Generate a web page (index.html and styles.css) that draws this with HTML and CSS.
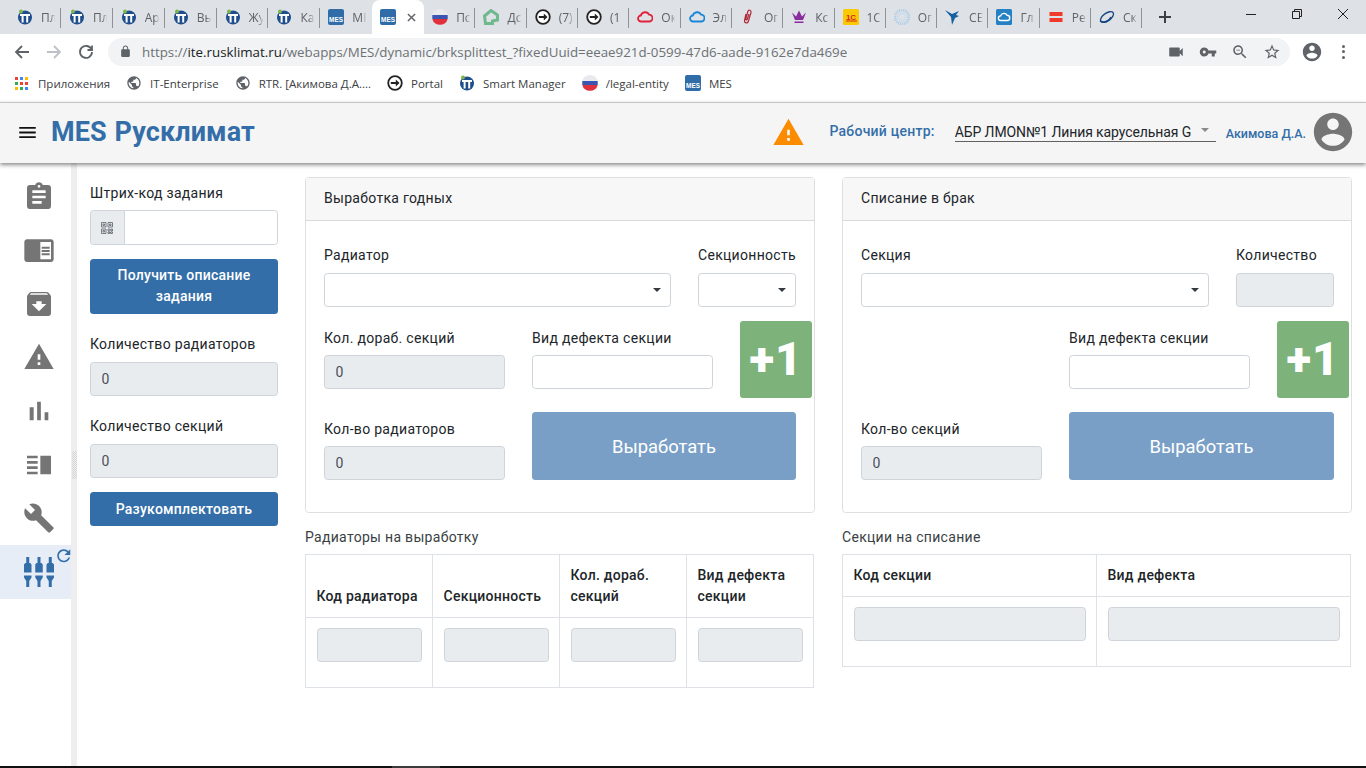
FILE: index.html
```html
<!DOCTYPE html>
<html lang="en">
  <head>
    <meta charset="UTF-8" />
    <meta name="viewport" content="width=device-width, initial-scale=1.0" />
    <title>MES Русклимат</title>
    <link rel="stylesheet" href="styles.css">
  </head>
  <body>
    <svg class="icon-defs" xmlns="http://www.w3.org/2000/svg">
      <symbol id="fav-it" viewBox="0 0 16 16">
        <circle cx="8" cy="8.5" r="7" fill="#1f4e8c" />
        <rect x="3" y="5" width="10" height="2" fill="#fff" />
        <rect x="4.6" y="7" width="2" height="6.5" fill="#fff" />
        <rect x="9.2" y="7" width="2" height="6.5" fill="#fff" />
        <circle cx="4" cy="2.6" r="2" fill="#7ab648" />
      </symbol>
      <symbol id="fav-ru" viewBox="0 0 16 16">
        <circle cx="8" cy="8" r="8" fill="#e9e9ee" />
        <path d="M.3 6h15.4v4H.3z" fill="#3a56b0" />
        <path d="M.3 10h15.4A8 8 0 0 1 .3 10z" fill="#e0303c" />
      </symbol>
      <symbol id="fav-house" viewBox="0 0 16 16">
        <path d="M1.500 7l6.500-5.500 6.500 4.500v5l-5 1v2.500H2.500z" fill="none" stroke="#6fb98f" stroke-width="3" />
      </symbol>
      <symbol id="fav-arrow" viewBox="0 0 16 16">
        <circle cx="8" cy="8" r="6.8" fill="#fff" stroke="#222" stroke-width="1.8" />
        <path d="M3.8 7.1h5V4.6L12.5 8l-3.7 3.4V8.9h-5z" fill="#222" />
      </symbol>
      <symbol id="fav-cloud-red" viewBox="0 0 16 16">
        <path d="M4.2 12.5a3 3 0 0 1-.3-6 4.4 4.4 0 0 1 8.2-.8 3.4 3.4 0 0 1 0 6.8z" fill="none" stroke="#e3203a" stroke-width="1.8" />
      </symbol>
      <symbol id="fav-cloud-blue" viewBox="0 0 16 16">
        <path d="M4.2 12.5a3 3 0 0 1-.3-6 4.4 4.4 0 0 1 8.2-.8 3.4 3.4 0 0 1 0 6.8z" fill="none" stroke="#1a86d8" stroke-width="1.8" />
      </symbol>
      <symbol id="fav-clip" viewBox="0 0 16 16">
        <path d="M6 5l-1.500 6.500c-.5 2.500 3 3.500 3.800 1L11 3.500C11.500 1 8.500.3 7.800 2.500L5.800 10c-.2 1 1 1.300 1.400.5L9 5" fill="none" stroke="#b02a37" stroke-width="1.200" />
      </symbol>
      <symbol id="fav-crown" viewBox="0 0 16 16">
        <path d="M1 3.500l3 7.500h8l3-7.500-4 4L8 1.500 5 7.500zM3.500 12.500h9V14h-9z" fill="#8a2d9c" />
      </symbol>
      <symbol id="fav-dots" viewBox="0 0 16 16">
        <circle cx="8" cy="8" r="7" fill="none" stroke="#a9cbe6" stroke-width="2.500" stroke-dasharray="1 1" />
        <circle cx="8" cy="8" r="4" fill="none" stroke="#c5dcee" stroke-width="3" stroke-dasharray="1 1" />
      </symbol>
      <symbol id="fav-bird" viewBox="0 0 16 16">
        <path d="M0 1l7 4 7-3-3 4 3 1-4 2-3 7-1-8z" fill="#15609e" />
      </symbol>
      <symbol id="fav-cloud-box" viewBox="0 0 16 16">
        <rect width="16" height="16" rx="1.500" fill="#2581c4" />
        <path d="M4.800 11.500a2.300 2.300 0 0 1-.2-4.600 3.500 3.500 0 0 1 6.500-.6 2.600 2.600 0 0 1 0 5.200z" fill="none" stroke="#fff" stroke-width="1.400" />
      </symbol>
      <symbol id="fav-stripes" viewBox="0 0 16 16">
        <path d="M1.500 3h13v4h-13zM1.500 9h13v4h-13z" fill="#ef3a2c" />
      </symbol>
      <symbol id="fav-orbit" viewBox="0 0 16 16">
        <ellipse cx="8" cy="8" rx="7.500" ry="3.800" transform="rotate(-35 8 8)" fill="none" stroke="#16477f" stroke-width="1.300" />
        <path d="M1 12c4 2 9 1 11-4" fill="none" stroke="#16477f" stroke-width="1.600" />
      </symbol>
      <symbol id="i-globe" viewBox="0 0 24 24">
        <path d="M12 2C6.480 2 2 6.480 2 12s4.480 10 10 10 10-4.480 10-10S17.520 2 12 2zm-1 17.930c-3.950-.49-7-3.850-7-7.930 0-.62.08-1.210.21-1.790L9 15v1c0 1.100.9 2 2 2v1.930zm6.900-2.540c-.26-.81-1-1.390-1.900-1.390h-1v-3c0-.55-.45-1-1-1H8v-2h2c.55 0 1-.45 1-1V7h2c1.100 0 2-.9 2-2v-.41c2.930 1.190 5 4.060 5 7.410 0 2.080-.8 3.970-2.100 5.390z" />
      </symbol>
      <symbol id="i-warning" viewBox="0 0 24 24">
        <path d="M1 21h22L12 2 1 21zm12-3h-2v-2h2v2zm0-4h-2v-4h2v4z" />
      </symbol>
      <symbol id="i-account" viewBox="0 0 24 24">
        <path d="M12 2C6.480 2 2 6.480 2 12s4.480 10 10 10 10-4.480 10-10S17.520 2 12 2zm0 3c1.660 0 3 1.340 3 3s-1.340 3-3 3-3-1.340-3-3 1.340-3 3-3zm0 14.200c-2.500 0-4.710-1.280-6-3.220.03-1.990 4-3.080 6-3.080 1.990 0 5.970 1.090 6 3.080-1.290 1.940-3.500 3.220-6 3.220z" />
      </symbol>
    </svg>

    <div class="tabstrip">
      <div class="tab"><svg class="fav"><use href="#fav-it" /></svg><span>Пл</span></div>
      <div class="tab"><svg class="fav"><use href="#fav-it" /></svg><span>Пл</span></div>
      <div class="tab"><svg class="fav"><use href="#fav-it" /></svg><span>Ар</span></div>
      <div class="tab"><svg class="fav"><use href="#fav-it" /></svg><span>Вь</span></div>
      <div class="tab"><svg class="fav"><use href="#fav-it" /></svg><span>Жу</span></div>
      <div class="tab"><svg class="fav"><use href="#fav-it" /></svg><span>Ка</span></div>
      <div class="tab tab-before-active">
        <svg class="fav fav-mes" viewBox="0 0 16 16"><rect width="16" height="16" rx="2" /><text x="8" y="12.600">MES</text></svg>
        <span>МЕ</span>
      </div>
      <div class="tab tab-active">
        <svg class="fav fav-mes" viewBox="0 0 16 16"><rect width="16" height="16" rx="2" /><text x="8" y="12.600">MES</text></svg>
        <svg class="tab-close" viewBox="0 0 10 10"><path d="M1 1l8 8M9 1l-8 8" /></svg>
      </div>
      <div class="tab"><svg class="fav"><use href="#fav-ru" /></svg><span>Пс</span></div>
      <div class="tab"><svg class="fav"><use href="#fav-house" /></svg><span>Дс</span></div>
      <div class="tab"><svg class="fav"><use href="#fav-arrow" /></svg><span>(7)</span></div>
      <div class="tab"><svg class="fav"><use href="#fav-arrow" /></svg><span>(1</span></div>
      <div class="tab"><svg class="fav"><use href="#fav-cloud-red" /></svg><span>Ок</span></div>
      <div class="tab"><svg class="fav"><use href="#fav-cloud-blue" /></svg><span>Эл</span></div>
      <div class="tab"><svg class="fav"><use href="#fav-clip" /></svg><span>Ог</span></div>
      <div class="tab"><svg class="fav"><use href="#fav-crown" /></svg><span>Кс</span></div>
      <div class="tab">
        <svg class="fav fav-1c" viewBox="0 0 16 16"><rect width="16" height="16" rx="1.500" /><text x="8" y="10.500">1С</text><path d="M3 11.500h11v1H3z" /></svg>
        <span>1С</span>
      </div>
      <div class="tab"><svg class="fav"><use href="#fav-dots" /></svg><span>Ог</span></div>
      <div class="tab"><svg class="fav"><use href="#fav-bird" /></svg><span>СЕ</span></div>
      <div class="tab"><svg class="fav"><use href="#fav-cloud-box" /></svg><span>Гл</span></div>
      <div class="tab"><svg class="fav"><use href="#fav-stripes" /></svg><span>Ре</span></div>
      <div class="tab"><svg class="fav"><use href="#fav-orbit" /></svg><span>Ск</span></div>
      <svg class="new-tab" viewBox="0 0 12 12"><path d="M6 0v12M0 6h12" /></svg>
      <div class="window-controls">
        <svg viewBox="0 0 12 12"><path d="M1 6.500h10" /></svg>
        <svg viewBox="0 0 12 12"><path d="M1.500 3.500h7v7h-7zM3.500 3.500v-2h7v7h-2" /></svg>
        <svg viewBox="0 0 12 12"><path d="M1 1l10 10M11 1L1 11" /></svg>
      </div>
    </div>

    <div class="toolbar">
      <svg class="nav-btn" viewBox="0 0 16 16"><path d="M15 8H2M8 2L2 8l6 6" /></svg>
      <svg class="nav-btn nav-off" viewBox="0 0 16 16"><path d="M1 8h13M8 2l6 6-6 6" /></svg>
      <svg class="nav-btn" viewBox="0 0 16 16"><path d="M13.500 5.500A6 6 0 1 0 14 8M14 1.500v4.500H9.500" /></svg>
      <div class="omnibox">
        <svg class="lock" viewBox="0 0 24 24"><path d="M18 8h-1V6c0-2.760-2.240-5-5-5S7 3.240 7 6v2H6c-1.100 0-2 .9-2 2v10c0 1.100.9 2 2 2h12c1.100 0 2-.9 2-2V10c0-1.100-.9-2-2-2zm-2.900 0H8.900V6c0-1.710 1.390-3.100 3.100-3.100 1.710 0 3.100 1.390 3.100 3.100v2z" /></svg>
        <div class="url">https://<b>ite.rusklimat.ru</b>/webapps/MES/dynamic/brksplittest_?fixedUuid=eeae921d-0599-47d6-aade-9162e7da469e</div>
        <svg class="omni-icon" viewBox="0 0 24 24"><path d="M17 10.500V7c0-.55-.45-1-1-1H4c-.55 0-1 .45-1 1v10c0 .55.45 1 1 1h12c.55 0 1-.45 1-1v-3.500l4 4v-11l-4 4z" /></svg>
        <svg class="omni-icon" viewBox="0 0 24 24"><path d="M12.650 10C11.830 7.670 9.610 6 7 6c-3.310 0-6 2.690-6 6s2.690 6 6 6c2.610 0 4.830-1.670 5.650-4H17v4h4v-4h2v-4H12.650zM7 14c-1.100 0-2-.9-2-2s.9-2 2-2 2 .9 2 2-.9 2-2 2z" /></svg>
        <svg class="omni-icon" viewBox="0 0 24 24"><path d="M15.500 14h-.79l-.28-.27C15.410 12.590 16 11.110 16 9.500 16 5.910 13.090 3 9.500 3S3 5.910 3 9.500 5.910 16 9.500 16c1.610 0 3.090-.59 4.230-1.570l.27.28v.79l5 4.990L20.490 19l-4.990-5zm-6 0C7.010 14 5 11.990 5 9.500S7.010 5 9.500 5 14 7.010 14 9.500 11.990 14 9.500 14zM7 9h5v1H7z" /></svg>
        <svg class="omni-icon" viewBox="0 0 24 24"><path d="M22 9.240l-7.190-.62L12 2 9.190 8.630 2 9.240l5.460 4.730L5.820 21 12 17.270 18.180 21l-1.630-7.030L22 9.240zM12 15.400l-3.760 2.270 1-4.280-3.320-2.880 4.380-.38L12 6.100l1.710 4.040 4.380.38-3.320 2.880 1 4.280L12 15.400z" /></svg>
      </div>
      <svg class="profile"><use href="#i-account" /></svg>
      <div class="menu-dots"><i></i><i></i><i></i></div>
    </div>

    <div class="bookmarks">
      <div class="bookmark">
        <div class="apps-grid">
          <i class="c1"></i><i class="c2"></i><i class="c3"></i>
          <i class="c4"></i><i class="c5"></i><i class="c1"></i>
          <i class="c3"></i><i class="c6"></i><i class="c2"></i>
        </div>
        <span>Приложения</span>
      </div>
      <div class="bookmark"><svg class="fav globe"><use href="#i-globe" /></svg><span>IT-Enterprise</span></div>
      <div class="bookmark"><svg class="fav globe"><use href="#i-globe" /></svg><span>RTR. [Акимова Д.А....</span></div>
      <div class="bookmark"><svg class="fav"><use href="#fav-arrow" /></svg><span>Portal</span></div>
      <div class="bookmark"><svg class="fav"><use href="#fav-it" /></svg><span>Smart Manager</span></div>
      <div class="bookmark"><svg class="fav"><use href="#fav-ru" /></svg><span>/legal-entity</span></div>
      <div class="bookmark">
        <svg class="fav fav-mes" viewBox="0 0 16 16"><rect width="16" height="16" rx="2" /><text x="8" y="12.600">MES</text></svg>
        <span>MES</span>
      </div>
    </div>

    <header class="app-header">
      <svg class="hamburger" viewBox="0 0 18 12"><path d="M0 0h18v2H0zM0 5h18v2H0zM0 10h18v2H0z" /></svg>
      <h1 class="app-title">MES Русклимат</h1>
      <svg class="header-warning"><use href="#i-warning" /></svg>
      <span class="wc-label">Рабочий центр:</span>
      <div class="wc-select">
        <span>АБР ЛМОN№1 Линия карусельная G</span>
      </div>
      <span class="user-name">Акимова Д.А.</span>
      <svg class="user-avatar"><use href="#i-account" /></svg>
    </header>

    <div class="app-body">
      <nav class="sidebar">
        <div class="side-item"><svg viewBox="0 0 24 24"><path d="M19 3h-4.180C14.400 1.840 13.300 1 12 1c-1.300 0-2.400.84-2.820 2H5c-1.100 0-2 .9-2 2v14c0 1.100.9 2 2 2h14c1.100 0 2-.9 2-2V5c0-1.100-.9-2-2-2zm-7 0c.55 0 1 .45 1 1s-.45 1-1 1-1-.45-1-1 .45-1 1-1zm2 14H7v-2h7v2zm3-4H7v-2h10v2zm0-4H7V7h10v2z" /></svg></div>
        <div class="side-item"><svg viewBox="0 0 24 24"><path fill-rule="evenodd" d="M3 4h18c1.100 0 2 .9 2 2v13c0 1.100-.9 2-2 2H3c-1.100 0-2-.9-2-2V6c0-1.100.9-2 2-2zm10 2v13h8V6h-8zm1 3.500h6V11h-6V9.500zm0 2.500h6v1.500h-6V12zm0 2.500h6V16h-6v-1.500z" /></svg></div>
        <div class="side-item"><svg viewBox="0 0 24 24"><path d="M20.540 5.230l-1.390-1.680C18.880 3.210 18.470 3 18 3H6c-.47 0-.88.21-1.160.55L3.460 5.230C3.170 5.570 3 6.020 3 6.500V19c0 1.100.9 2 2 2h14c1.100 0 2-.9 2-2V6.500c0-.48-.17-.93-.46-1.270zM12 17.500L6.500 12H10v-2h4v2h3.500L12 17.500zM5.120 5l.81-1h12l.94 1H5.120z" /></svg></div>
        <div class="side-item"><svg><use href="#i-warning" /></svg></div>
        <div class="side-item"><svg viewBox="0 0 24 24"><path d="M5 9.200h3V19H5zM10.600 5h2.800v14h-2.800zm5.600 8H19v6h-2.800z" /></svg></div>
        <div class="side-item"><svg viewBox="0 0 24 24"><path d="M3 15h8v-2H3v2zm0 4h8v-2H3v2zm0-8h8V9H3v2zm0-6v2h8V5H3zm10 0h8v14h-8V5z" /></svg></div>
        <div class="side-item"><svg viewBox="0 0 24 24"><path d="M22.700 19l-9.100-9.100c.9-2.300.4-5-1.500-6.900-2-2-5-2.400-7.400-1.300L9 6 6 9 1.600 4.700C.4 7.100.9 10.100 2.900 12.100c1.900 1.900 4.600 2.400 6.900 1.500l9.100 9.100c.4.400 1 .4 1.400 0l2.300-2.300c.5-.4.5-1.100.1-1.400z" /></svg></div>
        <div class="side-item side-active">
          <svg class="plugs" viewBox="0 0 30 30">
            <path id="plug" d="M2.250 0h3v6h1l1.250 1.500v8H0v-8L1.250 6h1zM0 18.500h7.500v2L5.250 24v6h-3v-6L0 20.500z" />
            <use href="#plug" x="11.250" />
            <use href="#plug" x="22.500" />
          </svg>
          <svg class="side-badge" viewBox="0 0 24 24"><path d="M17.650 6.350C16.200 4.900 14.210 4 12 4c-4.420 0-7.990 3.580-7.990 8s3.570 8 7.990 8c3.730 0 6.840-2.550 7.730-6h-2.080c-.82 2.330-3.040 4-5.650 4-3.310 0-6-2.690-6-6s2.690-6 6-6c1.660 0 3.140.69 4.220 1.780L13 11h7V4l-2.350 2.350z" /></svg>
        </div>
      </nav>

      <div class="splitter"><div class="splitter-grip"></div></div>

      <main class="content">
        <section class="task-col">
          <div class="field">
            <label>Штрих-код задания</label>
            <div class="input-group">
              <span class="input-addon">
                <svg viewBox="0 0 12 12"><path d="M.5.5h4.500v4.500H.5zM7 .5h4.500v4.500H7zM.5 7h4.500v4.500H.5zM2 2h1.500v1.500H2zM8.500 2H10v1.500H8.500zM2 8.500h1.500V10H2zM7 7h2v2H7zM10 7h1.500v2H10zM7 10h1.500v1.500H7zM9.500 10h2v1.500h-2z" /></svg>
              </span>
              <input class="form-control" type="text" />
            </div>
          </div>
          <button class="btn btn-primary btn-describe">Получить описание задания</button>
          <div class="field">
            <label>Количество радиаторов</label>
            <input class="form-control" type="text" value="0" disabled />
          </div>
          <div class="field">
            <label>Количество секций</label>
            <input class="form-control" type="text" value="0" disabled />
          </div>
          <button class="btn btn-primary btn-split">Разукомплектовать</button>
        </section>

        <section class="work-col">
          <div class="card">
            <div class="card-header">Выработка годных</div>
            <div class="card-body">
              <div class="row">
                <div class="field grow">
                  <label>Радиатор</label>
                  <div class="select"></div>
                </div>
                <div class="field col-small">
                  <label>Секционность</label>
                  <div class="select"></div>
                </div>
              </div>
              <div class="row">
                <div class="field col-half pushed">
                  <label>Кол. дораб. секций</label>
                  <input class="form-control" type="text" value="0" disabled />
                </div>
                <div class="field col-half pushed">
                  <label>Вид дефекта секции</label>
                  <input class="form-control" type="text" />
                </div>
                <button class="btn-plus">+1</button>
              </div>
              <div class="row row-end">
                <div class="field col-half">
                  <label>Кол-во радиаторов</label>
                  <input class="form-control" type="text" value="0" disabled />
                </div>
                <button class="btn btn-primary btn-make" disabled>Выработать</button>
              </div>
            </div>
          </div>
          <div class="table-title">Радиаторы на выработку</div>
          <table class="grid-table">
            <thead>
              <tr>
                <th>Код радиатора</th>
                <th>Секционность</th>
                <th>Кол. дораб. секций</th>
                <th>Вид дефекта секции</th>
              </tr>
            </thead>
            <tbody>
              <tr>
                <td><input class="form-control" type="text" disabled /></td>
                <td><input class="form-control" type="text" disabled /></td>
                <td><input class="form-control" type="text" disabled /></td>
                <td><input class="form-control" type="text" disabled /></td>
              </tr>
            </tbody>
          </table>
        </section>

        <section class="work-col work-col-right">
          <div class="card">
            <div class="card-header">Списание в брак</div>
            <div class="card-body">
              <div class="row">
                <div class="field grow">
                  <label>Секция</label>
                  <div class="select"></div>
                </div>
                <div class="field col-small">
                  <label>Количество</label>
                  <input class="form-control" type="text" disabled />
                </div>
              </div>
              <div class="row">
                <div class="col-half"></div>
                <div class="field col-half pushed">
                  <label>Вид дефекта секции</label>
                  <input class="form-control" type="text" />
                </div>
                <button class="btn-plus">+1</button>
              </div>
              <div class="row row-end">
                <div class="field col-half">
                  <label>Кол-во секций</label>
                  <input class="form-control" type="text" value="0" disabled />
                </div>
                <button class="btn btn-primary btn-make" disabled>Выработать</button>
              </div>
            </div>
          </div>
          <div class="table-title">Секции на списание</div>
          <table class="grid-table">
            <thead>
              <tr>
                <th>Код секции</th>
                <th>Вид дефекта</th>
              </tr>
            </thead>
            <tbody>
              <tr>
                <td><input class="form-control" type="text" disabled /></td>
                <td><input class="form-control" type="text" disabled /></td>
              </tr>
            </tbody>
          </table>
        </section>
      </main>
    </div>

    <div class="taskbar"><div class="taskbar-item"></div></div>
  </body>
</html>
```

FILE: styles.css
```css
* {
  box-sizing: border-box;
  margin: 0;
  padding: 0;
}

html,
body {
  height: 100%;
}

body {
  display: flex;
  flex-direction: column;
  width: 1366px;
  height: 768px;
  overflow: hidden;
  background-color: white;
  font-family: Roboto, "Liberation Sans", sans-serif;
  font-size: 14px;
  line-height: 21px;
  color: #212529;
}

.icon-defs {
  position: absolute;
  width: 0;
  height: 0;
}

/* browser chrome */

.tabstrip {
  display: flex;
  align-items: center;
  flex: 0 0 34px;
  padding-left: 9px;
  background-color: #dee1e6;
  font-family: "Open Sans", sans-serif;
  font-size: 12px;
  color: #5f6368;
}

.tab {
  display: flex;
  align-items: center;
  flex: 0 0 51.3px;
  height: 34px;
  padding-left: 8px;
  position: relative;
}

.tab:nth-child(-n + 8) {
  flex-basis: 51.9px;
}

.tab::after {
  content: "";
  position: absolute;
  right: 0;
  top: 8px;
  width: 1px;
  height: 20px;
  background-color: #8f9296;
}

.tab span {
  width: 17px;
  margin-left: 8px;
  white-space: nowrap;
  -webkit-mask-image: linear-gradient(to right, #000 55%, transparent 85%);
  mask-image: linear-gradient(to right, #000 55%, transparent 85%);
}

.tab-before-active::after {
  display: none;
}

.tab-active {
  background-color: white;
  border-radius: 8px 8px 0 0;
}

.tab-active::after {
  display: none;
}

.tab-close {
  width: 9px;
  height: 9px;
  margin-left: 11px;
  fill: none;
  stroke: #5f6368;
  stroke-width: 1.6;
}

.fav {
  flex: 0 0 16px;
  width: 16px;
  height: 16px;
}

.fav-mes rect {
  fill: #2f6ca8;
}

.fav-mes text {
  font-family: "Liberation Sans", sans-serif;
  font-size: 6.400px;
  font-weight: 700;
  text-anchor: middle;
  fill: white;
}

.fav-1c rect {
  fill: #fbc900;
}

.fav-1c path {
  fill: #d8232a;
}

.fav-1c text {
  font-family: "Liberation Sans", sans-serif;
  font-size: 8px;
  font-weight: 700;
  text-anchor: middle;
  fill: #d8232a;
}

.new-tab {
  width: 12px;
  height: 12px;
  margin: 0 0 0 17px;
  fill: none;
  stroke: #3c4043;
  stroke-width: 2;
}

.window-controls {
  display: flex;
  gap: 34px;
  margin-left: 74px;
  margin-top: -6px;
}

.window-controls svg {
  width: 12px;
  height: 12px;
  fill: none;
  stroke: #222;
  stroke-width: 1;
}

.toolbar {
  display: flex;
  align-items: center;
  flex: 0 0 35px;
  padding-left: 14px;
  background-color: white;
}

.nav-btn {
  width: 16px;
  height: 16px;
  margin-right: 16px;
  fill: none;
  stroke: #5f6368;
  stroke-width: 1.8;
}

.nav-off {
  stroke: #bdc1c6;
}

.omnibox {
  display: flex;
  align-items: center;
  width: 1182px;
  height: 28px;
  margin-left: -2px;
  padding: 0 9px 0 11px;
  border-radius: 14px;
  background-color: #f1f3f4;
}

.lock {
  width: 13px;
  height: 13px;
  fill: #5f6368;
}

.url {
  flex: 1;
  margin-left: 10px;
  padding-top: 1px;
  font-family: "Open Sans", sans-serif;
  font-size: 13.330px;
  color: #6d7175;
  white-space: nowrap;
}

.url b {
  font-weight: 400;
  color: #202124;
}

.omni-icon {
  width: 18px;
  height: 18px;
  margin-left: 14px;
  fill: #5f6368;
}

.profile {
  width: 22px;
  height: 22px;
  margin-left: 11px;
  fill: #5f6368;
}

.menu-dots {
  display: flex;
  flex-direction: column;
  gap: 2.500px;
  margin-left: 19px;
}

.menu-dots i {
  display: block;
  width: 3px;
  height: 3px;
  border-radius: 50%;
  background-color: #5f6368;
}

.bookmarks {
  display: flex;
  align-items: center;
  gap: 16px;
  flex: 0 0 33px;
  padding: 0 0 5px 15px;
  background-color: white;
  font-family: "Open Sans", sans-serif;
  font-size: 11.500px;
  color: #3c4043;
}

.bookmark {
  display: flex;
  align-items: center;
  gap: 8px;
}

.bookmark .globe {
  fill: #5f6368;
}

.apps-grid {
  display: grid;
  grid-template-columns: repeat(3, 3px);
  gap: 2px;
  width: 15px;
}

.apps-grid i {
  display: block;
  height: 3px;
}

.c1 { background-color: #ea4335; }
.c2 { background-color: #4285f4; }
.c3 { background-color: #fbbc04; }
.c4 { background-color: #34a853; }
.c5 { background-color: #ea4335; }
.c6 { background-color: #34a853; }

/* app header */

.app-header {
  display: flex;
  align-items: center;
  flex: 0 0 61px;
  padding: 0 10.500px 0 19px;
  border-top: 1px solid #c4c4c4;
  background-color: #f5f5f5;
  box-shadow: 0 2px 4px rgba(0, 0, 0, 0.45);
  position: relative;
  z-index: 2;
}

.hamburger {
  width: 17px;
  height: 11px;
  margin-top: -1px;
  fill: #111;
}

.app-title {
  margin: 0 0 2px 15px;
  font-size: 27px;
  font-weight: 700;
  letter-spacing: 0.100px;
  word-spacing: 1px;
  color: #336ea8;
  white-space: nowrap;
}

.header-warning {
  width: 33px;
  height: 33px;
  margin: 0 0 2px auto;
  fill: #fb8c00;
}

.wc-label {
  margin: 0 0 3px 24.500px;
  font-weight: 500;
  letter-spacing: 0.250px;
  color: #336ea8;
}

.wc-select {
  width: 261px;
  height: 22px;
  margin: 0 0 4px 20px;
  padding-top: 2px;
  border-bottom: 1px solid #616161;
  letter-spacing: -0.100px;
  color: #212529;
  white-space: nowrap;
  position: relative;
}

.wc-select::after {
  content: "";
  position: absolute;
  right: 6.500px;
  top: 8px;
  border-left: 4.500px solid transparent;
  border-right: 4.500px solid transparent;
  border-top: 4.500px solid #8a8a8a;
}

.user-name {
  margin-left: 10px;
  font-size: 12.500px;
  font-weight: 500;
  color: #336ea8;
  white-space: nowrap;
}

.user-avatar {
  width: 46px;
  height: 46px;
  margin: 0 0 2px 3.500px;
  fill: #757575;
}

/* page */

.app-body {
  display: flex;
  flex: 1;
  min-height: 0;
}

.sidebar {
  flex: 0 0 71px;
  padding-top: 6.800px;
}

.side-item {
  display: flex;
  align-items: center;
  justify-content: center;
  height: 53.600px;
  position: relative;
}

.side-item svg {
  width: 32px;
  height: 32px;
  fill: #757575;
  margin-left: 6px;
}

.side-active {
  background-color: #e6edf6;
}

.side-item .plugs {
  width: 30px;
  height: 30px;
  fill: #336ea8;
}

.side-item .side-badge {
  position: absolute;
  top: 1px;
  right: -2.250px;
  width: 19.500px;
  height: 19.500px;
  margin: 0;
  fill: #336ea8;
}

.splitter {
  display: flex;
  align-items: center;
  flex: 0 0 6px;
  background-color: #eeeeee;
}

.splitter-grip {
  width: 5px;
  height: 28px;
  margin-left: 0.500px;
  background: repeating-conic-gradient(#d6d6d6 0 25%, transparent 0 50%) 0 0 / 2px 2px;
}

.content {
  display: flex;
  align-items: flex-start;
  gap: 27px;
  flex: 1;
  padding: 14px 14px 0 13px;
}

.task-col {
  flex: 0 0 188px;
  padding-top: 6px;
}

.task-col .field {
  margin-bottom: 20px;
}

.task-col .field label {
  margin-bottom: 7px;
}

.task-col .field:first-child {
  margin-bottom: 14px;
}

.task-col .field:first-child label {
  margin-bottom: 6px;
}

.work-col {
  flex: 0 0 510px;
}

.field label {
  display: block;
  margin-bottom: 6px;
  letter-spacing: 0.300px;
  white-space: nowrap;
}

.row:first-child .field label {
  margin-bottom: 7px;
}

.form-control {
  display: block;
  width: 100%;
  height: 34px;
  padding: 0 10.500px;
  border: 1px solid #ced4da;
  border-radius: 3.500px;
  background-color: white;
  font-family: inherit;
  font-size: 14px;
  color: #495057;
}

.form-control:disabled {
  background-color: #e9ecef;
}

.input-group {
  display: flex;
}

.input-group .form-control {
  height: 35px;
  border-radius: 0 3.500px 3.500px 0;
  margin-left: -1px;
}

.input-addon {
  display: flex;
  align-items: center;
  justify-content: center;
  flex: 0 0 34.500px;
  height: 35px;
  border: 1px solid #ced4da;
  border-radius: 3.500px 0 0 3.500px;
  background-color: #e9ecef;
}

.input-addon svg {
  width: 12px;
  height: 12px;
  fill: none;
  stroke: #6b7075;
  stroke-width: 0.900;
}

.btn {
  display: block;
  width: 100%;
  border: none;
  border-radius: 3.500px;
  font-family: inherit;
  color: white;
  cursor: pointer;
}

.btn-primary {
  background-color: #336ea8;
}

.btn-primary:disabled {
  background-color: #7a9fc7;
}

.btn-describe {
  height: 55px;
  margin-bottom: 20px;
  padding: 0 20px 2px;
  font-size: 14px;
  line-height: 21px;
  font-weight: 500;
  letter-spacing: 0.250px;
}

.btn-split {
  height: 34px;
  margin-top: -6px;
  font-size: 14px;
  font-weight: 500;
  letter-spacing: 0.250px;
}

.card {
  border: 1px solid #dfdfdf;
  border-radius: 3.500px;
}

.card-header {
  height: 43px;
  padding: 10px 18px;
  border-bottom: 1px solid #d9d9d9;
  background-color: #f7f7f7;
  letter-spacing: 0.300px;
}

.card-body {
  display: flex;
  flex-direction: column;
  gap: 14px;
  padding: 24px 18px 32px;
}

.work-col-right .card-body {
  padding-right: 17px;
}

.row {
  display: flex;
  gap: 27px;
}

.row-end {
  align-items: flex-end;
}

.grow {
  flex: 1;
}

.col-small {
  flex: 0 0 98px;
}

.col-half {
  flex: 0 0 181px;
}

.pushed {
  margin-top: 7px;
}

.select {
  height: 34px;
  border: 1px solid #ced4da;
  border-radius: 3.500px;
  background-color: white;
  position: relative;
}

.select::after {
  content: "";
  position: absolute;
  right: 9px;
  top: 14px;
  border-left: 4.500px solid transparent;
  border-right: 4.500px solid transparent;
  border-top: 4.500px solid #343a40;
}

.btn-plus {
  flex: 0 0 72px;
  height: 77px;
  margin-right: -16px;
  padding-bottom: 2px;
  border: none;
  border-radius: 3px;
  background-color: #7db37a;
  font-family: inherit;
  font-size: 46px;
  font-weight: 900;
  letter-spacing: 1px;
  color: white;
}

.work-col-right .btn-plus {
  margin-right: -15px;
}

.btn-make {
  flex: 1;
  width: auto;
  height: 68px;
  font-size: 18.400px;
  font-weight: 400;
}

.table-title {
  margin: 14px 0 6px;
  letter-spacing: 0.300px;
  color: #3a3f44;
}

.grid-table {
  width: 509px;
  table-layout: fixed;
  border-collapse: collapse;
}

.grid-table th,
.grid-table td {
  padding: 10.500px;
  border: 1px solid #dee2e6;
  text-align: left;
  vertical-align: bottom;
}

.grid-table th {
  padding-top: 9.500px;
  padding-bottom: 10px;
  font-weight: 500;
  letter-spacing: 0.250px;
}

.grid-table td {
  padding-bottom: 24.500px;
  vertical-align: top;
}

.taskbar {
  flex: 0 0 2px;
  background-color: #101010;
}

.taskbar-item {
  width: 48px;
  height: 2px;
  margin-left: 392px;
  background-color: #3b3b3b;
}
```
